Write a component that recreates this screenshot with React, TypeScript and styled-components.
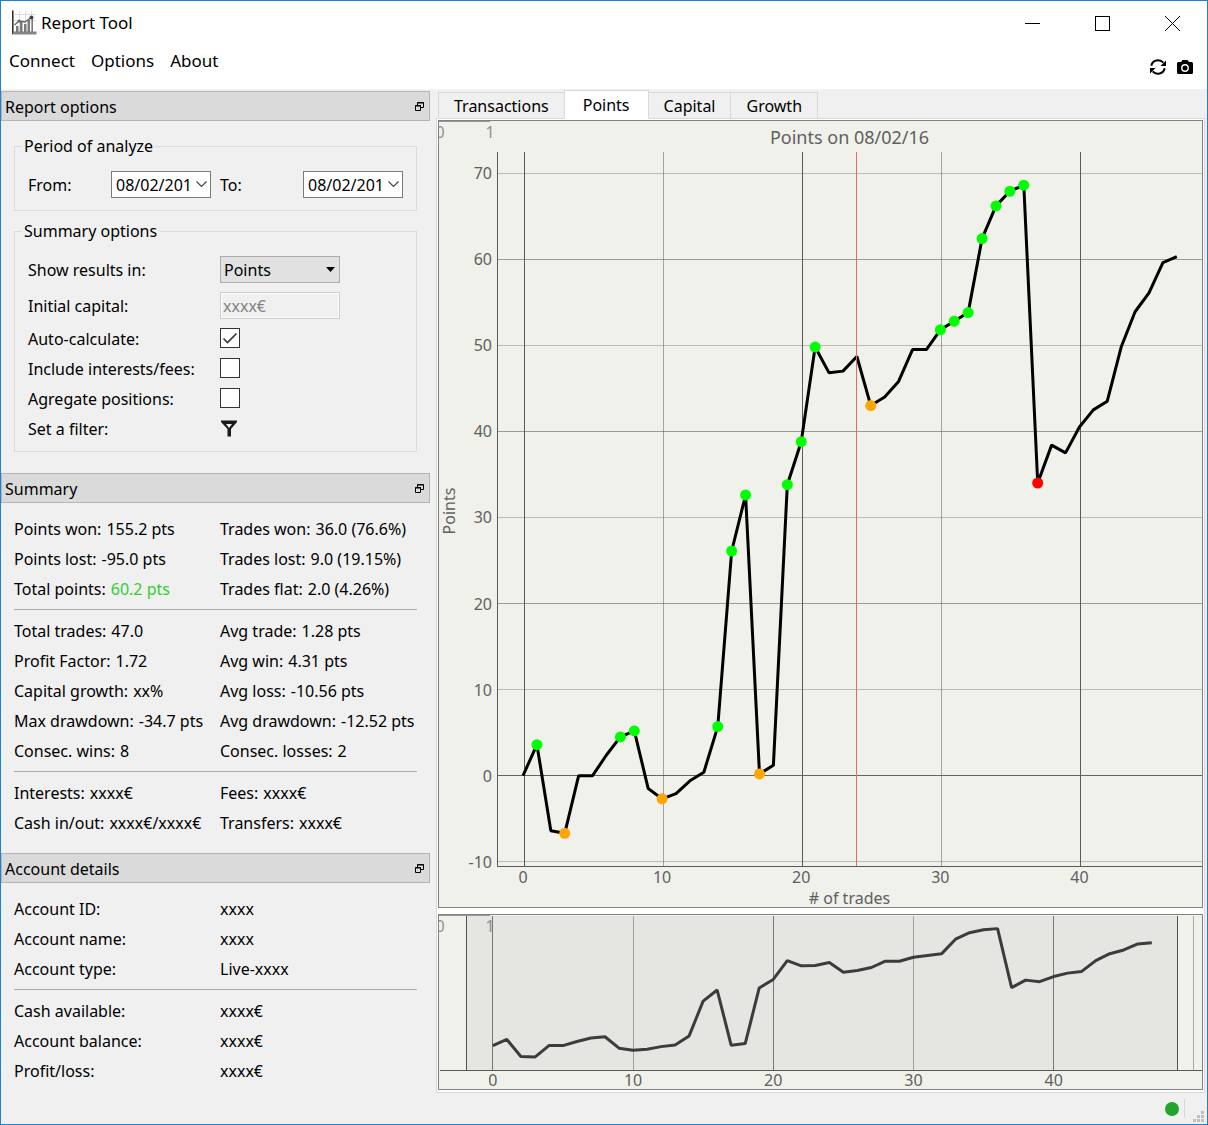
import React, { useLayoutEffect, useRef, useState } from "react";
import styled, { createGlobalStyle } from "styled-components";

const font = '"Noto Sans", "Open Sans", Tahoma, sans-serif';

const GlobalStyle = createGlobalStyle`
  *, *::before, *::after { box-sizing: border-box; }
  body { margin: 0; background: #f0f0f0; }
  body, button, input, select, text {
    font-family: ${font};
    font-size: 16px;
    color: #000;
  }
`;

/* ---------- window frame ---------- */

const Window = styled.div`
  min-height: 100vh;
  display: flex;
  flex-direction: column;
  border: 1px solid #1883d7;
  background: #f0f0f0;
  line-height: 20px;
`;

const TitleBar = styled.header`
  display: flex;
  align-items: center;
  height: 44px;
  padding-left: 10px;
  background: #fff;
`;

const Title = styled.h1`
  margin: 0 0 0 4px;
  flex: 1;
  font-size: 17px;
  font-weight: 400;
`;

const WindowButton = styled.button`
  width: 70px;
  height: 43px;
  padding: 0;
  display: grid;
  place-items: center;
  border: 0;
  background: transparent;
`;

const MenuBar = styled.div`
  display: flex;
  justify-content: space-between;
  height: 44px;
  background: #fff;
`;

const Menu = styled.nav`
  display: flex;
  gap: 16px;
  height: 30px;
  padding-left: 8px;
`;

const MenuItem = styled.button`
  padding: 0;
  border: 0;
  background: transparent;
  font-size: 17px;
`;

const Tools = styled.div`
  display: flex;
  align-items: center;
  gap: 9px;
  padding-right: 13px;
`;

const IconButton = styled.button`
  width: 18px;
  height: 18px;
  padding: 0;
  display: grid;
  place-items: center;
  border: 0;
  background: transparent;
`;

const Main = styled.main`
  flex: 1;
  display: flex;
  gap: 6px;
  padding-right: 2px;
`;

/* ---------- docks ---------- */

const Sidebar = styled.aside`
  flex: none;
  display: flex;
  flex-direction: column;
  gap: 15px;
  width: 429px;
  padding-top: 2px;
`;

const DockHeader = styled.div`
  display: flex;
  align-items: center;
  justify-content: space-between;
  height: 30px;
  padding: 1px 1px 0 3px;
  border: 1px solid #b5b5b5;
  background: #dadada;
`;

const DockTitle = styled.h2`
  margin: 0;
  font-size: 16px;
  font-weight: 400;
`;

const OptionsBody = styled.div`
  display: flex;
  flex-direction: column;
  gap: 10px;
  padding: 15px 13px 6px 13px;
`;

const Group = styled.fieldset`
  margin: 0;
  padding: 0;
  border: 1px solid #dcdcdc;
`;

const Legend = styled.legend`
  margin-left: 7px;
  padding: 0 2px;
  line-height: 21px;
`;

const PeriodGrid = styled.div`
  display: grid;
  grid-template-columns: 83px 109px 83px 100px;
  align-items: center;
  padding: 14px 13px 12px;
`;

const OptionsGrid = styled.div`
  display: grid;
  grid-template-columns: 192px 120px;
  grid-template-rows: 27px 27px repeat(4, 21px);
  row-gap: 9px;
  align-items: center;
  padding: 14px 13px 12px;
`;

const DateBox = styled.div`
  display: flex;
  width: 100px;
  height: 27px;
  border: 1px solid #7a7a7a;
  background: #fff;
`;

const DateInput = styled.input`
  flex: 1;
  min-width: 0;
  padding: 0 0 0 4px;
  border: 0;
  outline: 0;
  background: transparent;
`;

const DropButton = styled.button`
  width: 18px;
  padding: 0;
  display: grid;
  place-items: center;
  border: 0;
  background: transparent;
`;

const Stack = styled.div`
  display: grid;
  align-items: center;
  & > * { grid-area: 1 / 1; }
  & > svg { pointer-events: none; }
`;

const CheckStack = styled(Stack)`
  align-self: start;
`;

const Select = styled.select`
  appearance: none;
  width: 120px;
  height: 27px;
  padding: 0 20px 0 3px;
  border: 1px solid #adadad;
  border-radius: 0;
  background: #e1e1e1;
`;

const Caret = styled.svg`
  justify-self: end;
  margin-right: 5px;
`;

const CapitalInput = styled.input`
  width: 120px;
  height: 27px;
  padding: 0 2px;
  border: 1px solid #ccc;
  background: #f0f0f0;
  box-shadow: inset 0 0 0 1px #fff;
  color: #838383;
`;

const Check = styled.input`
  appearance: none;
  width: 20px;
  height: 20px;
  margin: 0;
  border: 1px solid #333;
  background: #fff;
  & + svg { visibility: hidden; }
  &:checked + svg { visibility: visible; }
`;

const Rows = styled.div`
  padding: 11px 13px 0 13px;
`;

const RowSet = styled.dl`
  margin: 0;
  display: grid;
  grid-template-columns: 206px 1fr;
  grid-auto-rows: 30px;
  align-items: center;
  white-space: nowrap;
  & + & {
    margin-top: 5px;
    padding-top: 6px;
    border-top: 1px solid #adadad;
  }
`;

const Stat = styled.div`
  display: flex;
  gap: 5px;
`;

const Term = styled.dt`
  margin: 0;
`;

const Value = styled.dd<{ $gain?: boolean }>`
  margin: 0;
  color: ${(p) => (p.$gain ? "#32cd32" : "inherit")};
`;

/* ---------- tabs and charts ---------- */

const Content = styled.section`
  flex: 1;
  min-width: 0;
  display: flex;
  flex-direction: column;
  padding-top: 1px;
`;

const TabList = styled.div`
  display: flex;
  align-items: flex-end;
  padding-left: 2px;
  margin-bottom: -1px;
  z-index: 1;
`;

const Tab = styled.button<{ $active?: boolean }>`
  height: ${(p) => (p.$active ? "29px" : "27px")};
  margin-right: -1px;
  padding: ${(p) => (p.$active ? "0 18px" : "0 15px")};
  border: 1px solid #d9d9d9;
  border-bottom-color: ${(p) => (p.$active ? "#fff" : "#d9d9d9")};
  background: ${(p) => (p.$active ? "#fff" : "#f0f0f0")};
  z-index: ${(p) => (p.$active ? 1 : 0)};
`;

const TabPane = styled.div`
  flex: 1;
  display: flex;
  flex-direction: column;
  gap: 6px;
  padding: 1px 1px 2px;
  border: 1px solid #d9d9d9;
  background: #fff;
`;

const ChartFrame = styled.div<{ $fixed?: boolean }>`
  flex: ${(p) => (p.$fixed ? "0 0 176px" : "1 1 500px")};
  display: flex;
  contain: size;
  overflow: hidden;
  border: 1px solid #828282;
  background: #f0f1eb;
`;

const Canvas = styled.svg`
  display: block;
  flex: none;
`;

const Label = styled.text`
  font-size: 16px;
  fill: #606060;
`;

const ChartTitle = styled(Label)`
  font-size: 18px;
`;

const StatusBar = styled.footer`
  display: flex;
  align-items: center;
  justify-content: flex-end;
  height: 31px;
  padding-right: 3px;
`;

const Online = styled.span`
  width: 14px;
  height: 14px;
  border-radius: 50%;
  background: #22a528;
`;

const StatusDivider = styled.span`
  width: 1px;
  height: 19px;
  margin: 0 8px 0 5px;
  background: #d7d7d7;
`;

const Grip = styled.svg`
  align-self: flex-end;
  margin-bottom: 2px;
`;

/* ---------- data ---------- */

const points = [
  0, 3.6, -6.4, -6.7, 0, 0, 2.4, 4.5, 5.2, -1.5, -2.7, -2.1, -0.6, 0.4, 5.7, 26.1,
  32.6, 0.2, 1.2, 33.8, 38.8, 49.8, 46.8, 47, 48.7, 43, 44, 45.8, 49.5, 49.5, 51.8,
  52.8, 53.8, 62.4, 66.2, 67.9, 68.6, 34, 38.4, 37.5, 40.5, 42.5, 43.5, 49.8, 53.9,
  56.1, 59.6, 60.3,
];

const highs = [1, 7, 8, 14, 15, 16, 19, 20, 21, 30, 31, 32, 33, 34, 35, 36];
const lows = [3, 10, 17, 25];
const maxDrawdown = 37;
const cursor = 24;
const view: [number, number] = [-1.87, 48.81];

const markers = [
  ...highs.map((i) => ({ i, color: "#00ff00" })),
  ...lows.map((i) => ({ i, color: "#ffa500" })),
  { i: maxDrawdown, color: "#ff0000" },
];

type Item = [string, string, boolean?];

const summary: Item[][] = [
  [
    ["Points won:", "155.2 pts"], ["Trades won:", "36.0 (76.6%)"],
    ["Points lost:", "-95.0 pts"], ["Trades lost:", "9.0 (19.15%)"],
    ["Total points:", "60.2 pts", true], ["Trades flat:", "2.0 (4.26%)"],
  ],
  [
    ["Total trades:", "47.0"], ["Avg trade:", "1.28 pts"],
    ["Profit Factor:", "1.72"], ["Avg win:", "4.31 pts"],
    ["Capital growth:", "xx%"], ["Avg loss:", "-10.56 pts"],
    ["Max drawdown:", "-34.7 pts"], ["Avg drawdown:", "-12.52 pts"],
    ["Consec. wins:", "8"], ["Consec. losses:", "2"],
  ],
  [
    ["Interests:", "xxxx€"], ["Fees:", "xxxx€"],
    ["Cash in/out:", "xxxx€/xxxx€"], ["Transfers:", "xxxx€"],
  ],
];

const account: Item[][] = [
  [["Account ID:", "xxxx"], ["Account name:", "xxxx"], ["Account type:", "Live-xxxx"]],
  [["Cash available:", "xxxx€"], ["Account balance:", "xxxx€"], ["Profit/loss:", "xxxx€"]],
];

/* ---------- charts ---------- */

function useSize() {
  const ref = useRef<HTMLDivElement>(null);
  const [size, setSize] = useState({ w: 0, h: 0 });
  useLayoutEffect(() => {
    const el = ref.current!;
    const measure = () => setSize({ w: el.clientWidth, h: el.clientHeight });
    measure();
    const observer = new ResizeObserver(measure);
    observer.observe(el);
    return () => observer.disconnect();
  }, []);
  return { ref, ...size };
}

const scale = (d0: number, d1: number, r0: number, r1: number) => (v: number) =>
  r0 + ((v - d0) / (d1 - d0)) * (r1 - r0);

const crisp = (v: number) => Math.floor(v) + 0.5;

const polyline = (x: (v: number) => number, y: (v: number) => number) =>
  points.map((v, i) => `${x(i)},${y(v)}`).join(" ");

function CornerAxis() {
  return (
    <g>
      <path d="M0 0.5H51" stroke="#969696" />
      <Label x={1} y={17} textAnchor="middle" opacity={0.65}>0</Label>
      <Label x={51} y={17} textAnchor="middle" opacity={0.65}>1</Label>
    </g>
  );
}

function MainChart() {
  const { ref, w, h } = useSize();
  const left = 58;
  const top = 31;
  const bottom = h - 41;
  const x = scale(view[0], view[1], left, w);
  const y = scale(-10.5, 72.46, bottom, top);
  return (
    <ChartFrame ref={ref}>
      <Canvas width={w} height={h} role="img" aria-label="Points on 08/02/16">
        <CornerAxis />
        <ChartTitle x={left / 2 + w / 2} y={23} textAnchor="middle">
          Points on 08/02/16
        </ChartTitle>
        {[-10, 0, 10, 20, 30, 40, 50, 60, 70].map((v) => (
          <g key={v}>
            <path
              d={`M${left} ${crisp(y(v))}H${w}`}
              stroke="#646464"
              opacity={v === 0 ? 1 : v % 20 === 0 ? 0.6 : 0.38}
            />
            <Label x={left - 5} y={y(v) + 6} textAnchor="end">{v}</Label>
          </g>
        ))}
        {[0, 10, 20, 30, 40].map((v) => (
          <g key={v}>
            <path
              d={`M${crisp(x(v) + 1)} ${top}V${bottom}`}
              stroke="#5a5a5a"
              opacity={v % 20 === 0 ? 1 : 0.5}
            />
            <Label x={x(v)} y={bottom + 17} textAnchor="middle">{v}</Label>
          </g>
        ))}
        <path d={`M${left + 0.5} ${top}V${bottom + 0.5}H${w}`} fill="none" stroke="#5a5a5a" />
        <polyline
          points={polyline(x, y)}
          fill="none"
          stroke="#000"
          strokeWidth={3}
          strokeLinejoin="bevel"
        />
        <path d={`M${crisp(x(cursor))} ${top}V${bottom}`} stroke="#f06470" />
        {markers.map((m) => (
          <circle key={m.i} cx={x(m.i)} cy={y(points[m.i])} r={5.5} fill={m.color} />
        ))}
        <Label x={left / 2 + w / 2} y={h - 3} textAnchor="middle"># of trades</Label>
        <Label
          textAnchor="middle"
          transform={`translate(16 ${(top + bottom) / 2 + 2}) rotate(-90)`}
        >
          Points
        </Label>
      </Canvas>
    </ChartFrame>
  );
}

function OverviewChart() {
  const { ref, w, h } = useSize();
  const top = 1;
  const bottom = h - 19;
  const x = scale(-3.84, 50.58, 0, w);
  const y = scale(-14.3, 76, bottom, top);
  return (
    <ChartFrame ref={ref} $fixed>
      <Canvas width={w} height={h} role="img" aria-label="Points overview">
        <rect
          x={x(view[0])}
          y={top}
          width={Math.max(0, x(view[1]) - x(view[0]))}
          height={Math.max(0, bottom - top)}
          fill="#e5e6e1"
        />
        <CornerAxis />
        {[0, 10, 20, 30, 40, 50].map((v) => (
          <g key={v}>
            <path
              d={`M${crisp(x(v))} ${top}V${bottom}`}
              stroke="#646464"
              opacity={v % 20 === 0 ? 0.85 : 0.5}
            />
            {v < 50 && <Label x={x(v)} y={bottom + 16} textAnchor="middle">{v}</Label>}
          </g>
        ))}
        {view.map((v) => (
          <path key={v} d={`M${crisp(x(v))} ${top}V${bottom}`} stroke="#505050" />
        ))}
        <path d={`M1 ${bottom + 0.5}H${w}`} stroke="#5a5a5a" />
        <polyline
          points={polyline(x, y)}
          fill="none"
          stroke="#3c3c3c"
          strokeWidth={3}
          strokeLinejoin="bevel"
        />
      </Canvas>
    </ChartFrame>
  );
}

/* ---------- icons ---------- */

const AppIcon = () => (
  <svg width="26" height="26" viewBox="0 0 26 26" aria-hidden="true">
    <g stroke="#ddd">
      <path d="M3 4.5H25M3 10.5H25M8.5 1V22M14.5 1V22M20.5 1V22" />
    </g>
    <path d="M1 0.5H3V21.5H25.5V24.5H1Z" fill="#858585" />
    <path d="M1.5 0.5V24" stroke="#333" />
    <g fill="#7a7a7a">
      <path d="M5 16H7.500V22H5ZM9 12H11.500V22H9ZM13 14H15.500V22H13ZM16.500 10H19V22H16.500ZM20.500 8H22V22H20.500Z" />
    </g>
    <path d="M3.500 15L8 11L14 12L20 7.500" fill="none" stroke="#666" strokeWidth="1.500" />
    <circle cx="20.500" cy="7.500" r="2" fill="#444" />
    <circle cx="8" cy="11" r="1.500" fill="#666" />
  </svg>
);

const FloatIcon = () => (
  <svg width="9" height="9" viewBox="0 0 9 9" aria-hidden="true">
    <path d="M2.500 3V0.500H8.500V5.500H6M2 1H9" fill="none" stroke="#000" />
    <path d="M0.500 3.500H5.500V8.500H0.500ZM0 4H6" fill="none" stroke="#000" />
  </svg>
);

const RefreshIcon = () => (
  <svg width="16" height="16" viewBox="0 0 16 16" aria-hidden="true">
    <path
      d="M1.300 6.700A6.900 6.900 0 0 1 13.300 3.700M14.700 9.300A6.900 6.900 0 0 1 2.700 12.300"
      fill="none"
      stroke="#000"
      strokeWidth="2"
    />
    <path d="M16 1.500V7H10.500ZM0 14.500V9H5.500Z" fill="#000" />
  </svg>
);

const CameraIcon = () => (
  <svg width="16" height="16" viewBox="0 0 16 16" aria-hidden="true">
    <path
      d="M5.500 1H10.500L12 3H14.500A1.500 1.500 0 0 1 16 4.500V13.500A1.500 1.500 0 0 1 14.500 15H1.500A1.500 1.500 0 0 1 0 13.500V4.500A1.500 1.500 0 0 1 1.500 3H4Z"
      fill="#000"
    />
    <circle cx="8" cy="9" r="3.200" fill="none" stroke="#fff" strokeWidth="1.400" />
  </svg>
);

const FilterIcon = () => (
  <svg width="16" height="17" viewBox="0 0 16 17" aria-hidden="true">
    <path
      d="M0 0.500H16V2L10 9V16.500H6.500V9L0 2ZM5 4L8 8L11 4Z"
      fill="#1a1a1a"
      fillRule="evenodd"
    />
  </svg>
);

/* ---------- page parts ---------- */

function Dock({ title, children }: { title: string; children: React.ReactNode }) {
  return (
    <section>
      <DockHeader>
        <DockTitle>{title}</DockTitle>
        <IconButton type="button" aria-label={`Float ${title}`}>
          <FloatIcon />
        </IconButton>
      </DockHeader>
      {children}
    </section>
  );
}

function DateField({ id, label }: { id: string; label: string }) {
  return (
    <>
      <label htmlFor={id}>{label}</label>
      <DateBox>
        <DateInput id={id} type="text" defaultValue="08/02/201" />
        <DropButton type="button" aria-label={`Pick date: ${label}`}>
          <svg width="11" height="7" viewBox="0 0 11 7" aria-hidden="true">
            <path d="M0.500 0.500L5.500 5.500L10.500 0.500" fill="none" stroke="#444" strokeWidth="1.200" />
          </svg>
        </DropButton>
      </DateBox>
    </>
  );
}

function CheckField({ id, label, checked }: { id: string; label: string; checked?: boolean }) {
  return (
    <>
      <label htmlFor={id}>{label}</label>
      <CheckStack>
        <Check id={id} type="checkbox" defaultChecked={checked} />
        <svg width="20" height="20" viewBox="0 0 20 20" aria-hidden="true">
          <path d="M3.500 10.500L7.500 14.500L16.500 5.500" fill="none" stroke="#333" strokeWidth="1.600" />
        </svg>
      </CheckStack>
    </>
  );
}

const tabs = ["Transactions", "Points", "Capital", "Growth"];

export default function App() {
  const [active, setActive] = useState("Points");
  return (
    <>
      <GlobalStyle />
      <Window>
        <TitleBar>
          <AppIcon />
          <Title>Report Tool</Title>
          <WindowButton type="button" aria-label="Minimize">
            <svg width="15" height="15" aria-hidden="true"><path d="M0 7.500H15" stroke="#000" /></svg>
          </WindowButton>
          <WindowButton type="button" aria-label="Maximize">
            <svg width="15" height="15" aria-hidden="true">
              <rect x="0.500" y="0.500" width="14" height="14" fill="none" stroke="#000" />
            </svg>
          </WindowButton>
          <WindowButton type="button" aria-label="Close">
            <svg width="15" height="15" aria-hidden="true">
              <path d="M0 0L15 15M15 0L0 15" stroke="#000" />
            </svg>
          </WindowButton>
        </TitleBar>
        <MenuBar>
          <Menu>
            <MenuItem type="button">Connect</MenuItem>
            <MenuItem type="button">Options</MenuItem>
            <MenuItem type="button">About</MenuItem>
          </Menu>
          <Tools>
            <IconButton type="button" aria-label="Refresh"><RefreshIcon /></IconButton>
            <IconButton type="button" aria-label="Screenshot"><CameraIcon /></IconButton>
          </Tools>
        </MenuBar>

        <Main>
          <Sidebar>
            <Dock title="Report options">
              <OptionsBody>
                <Group>
                  <Legend>Period of analyze</Legend>
                  <PeriodGrid>
                    <DateField id="from" label="From:" />
                    <DateField id="to" label="To:" />
                  </PeriodGrid>
                </Group>
                <Group>
                  <Legend>Summary options</Legend>
                  <OptionsGrid>
                    <label htmlFor="unit">Show results in:</label>
                    <Stack>
                      <Select id="unit" defaultValue="Points">
                        <option>Points</option>
                      </Select>
                      <Caret width="9" height="5" viewBox="0 0 9 5" aria-hidden="true">
                        <path d="M0 0H9L4.500 5Z" fill="#000" />
                      </Caret>
                    </Stack>
                    <label htmlFor="capital">Initial capital:</label>
                    <CapitalInput id="capital" type="text" defaultValue="xxxx€" disabled />
                    <CheckField id="auto" label="Auto-calculate:" checked />
                    <CheckField id="fees" label="Include interests/fees:" />
                    <CheckField id="aggregate" label="Agregate positions:" />
                    <label htmlFor="filter">Set a filter:</label>
                    <IconButton id="filter" type="button"><FilterIcon /></IconButton>
                  </OptionsGrid>
                </Group>
              </OptionsBody>
            </Dock>

            <Dock title="Summary">
              <Rows>
                {summary.map((set, n) => (
                  <RowSet key={n}>
                    {set.map(([term, value, gain]) => (
                      <Stat key={term}>
                        <Term>{term}</Term>
                        <Value $gain={gain}>{value}</Value>
                      </Stat>
                    ))}
                  </RowSet>
                ))}
              </Rows>
            </Dock>

            <Dock title="Account details">
              <Rows>
                {account.map((set, n) => (
                  <RowSet key={n}>
                    {set.map(([term, value]) => (
                      <React.Fragment key={term}>
                        <Term>{term}</Term>
                        <Value>{value}</Value>
                      </React.Fragment>
                    ))}
                  </RowSet>
                ))}
              </Rows>
            </Dock>
          </Sidebar>

          <Content>
            <TabList role="tablist">
              {tabs.map((name) => (
                <Tab
                  key={name}
                  type="button"
                  role="tab"
                  aria-selected={name === active}
                  $active={name === active}
                  onClick={() => setActive(name)}
                >
                  {name}
                </Tab>
              ))}
            </TabList>
            <TabPane role="tabpanel">
              <MainChart />
              <OverviewChart />
            </TabPane>
          </Content>
        </Main>

        <StatusBar>
          <Online />
          <StatusDivider />
          <Grip width="11" height="11" viewBox="0 0 11 11" aria-hidden="true">
            <path
              d="M8 0H11V3H8ZM4 4H7V7H4ZM8 4H11V7H8ZM0 8H3V11H0ZM4 8H7V11H4ZM8 8H11V11H8Z"
              fill="#bfbfbf"
            />
          </Grip>
        </StatusBar>
      </Window>
    </>
  );
}
